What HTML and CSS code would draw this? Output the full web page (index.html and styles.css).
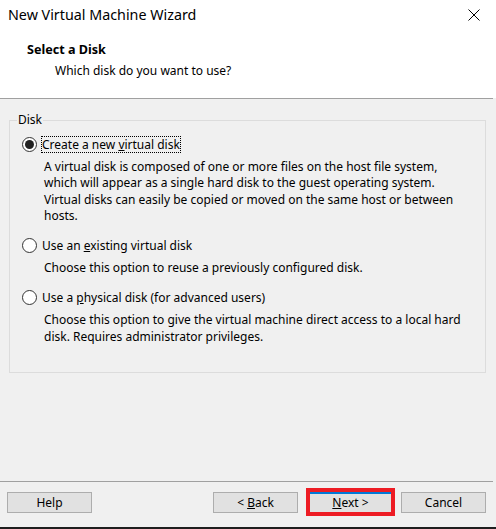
FILE: index.html
```html
<!DOCTYPE html>
<html>
<head>
<meta charset="utf-8">
<link rel="stylesheet" href="styles.css">
</head>
<body>
<div class="window">
  <div class="header">
    <div class="titlebar">
      <span class="title">New Virtual Machine Wizard</span>
      <svg class="close" width="12" height="12" viewBox="0 0 12 12"><path d="M0.5 0.5 L11.5 11.5 M11.5 0.5 L0.5 11.5" stroke="#000" stroke-width="1" fill="none"/></svg>
    </div>
    <div class="heading">Select a Disk</div>
    <div class="subheading">Which disk do you want to use?</div>
  </div>
  <div class="separator"></div>
  <div class="content">
    <fieldset class="group">
      <legend class="legend">Disk</legend>
      <div class="options">
        <div class="option">
          <div class="radio-row"><span class="radio checked"></span><span class="label focus">Create a new <u>v</u>irtual disk</span></div>
          <p class="desc">A virtual disk is composed of one or more files on the host file system, which will appear as a single hard disk to the guest operating system. Virtual disks can easily be copied or moved on the same host or between hosts.</p>
        </div>
        <div class="option">
          <div class="radio-row"><span class="radio"></span><span class="label">Use an <u>e</u>xisting virtual disk</span></div>
          <p class="desc">Choose this option to reuse a previously configured disk.</p>
        </div>
        <div class="option">
          <div class="radio-row"><span class="radio"></span><span class="label">Use a <u>p</u>hysical disk (for advanced users)</span></div>
          <p class="desc">Choose this option to give the virtual machine direct access to a local hard disk. Requires administrator privileges.</p>
        </div>
      </div>
    </fieldset>
  </div>
  <div class="separator"></div>
  <div class="footer">
    <button class="btn">Help</button>
    <button class="btn back">&lt; <u>B</u>ack</button>
    <button class="btn next"><u>N</u>ext &gt;</button>
    <button class="btn cancel">Cancel</button>
  </div>
  <div class="bottom-edge"></div>
</div>
</body>
</html>
```

FILE: styles.css
```css
* { box-sizing: border-box; }
html, body { margin: 0; padding: 0; }
body {
  width: 496px;
  height: 529px;
  overflow: hidden;
  background: #f0f0f0;
  font-family: "Noto Sans", "Open Sans", sans-serif;
  font-size: 12px;
  color: #000;
}
.window {
  width: 496px;
  height: 529px;
  display: flex;
  flex-direction: column;
}
.header {
  height: 98px;
  background: #fff;
  display: flex;
  flex-direction: column;
}
.titlebar {
  height: 25px;
  padding: 5px 0 0 8px;
  display: flex;
  align-items: flex-start;
  justify-content: space-between;
}
.title {
  font-size: 14.3px;
  line-height: 20px;
}
.close {
  margin: 4px 16px 0 0;
  display: block;
}
.heading {
  margin-top: 17px;
  padding-left: 27px;
  font-weight: bold;
  font-size: 12.6px;
  line-height: 16px;
}
.subheading {
  margin-top: 5px;
  padding-left: 55px;
  line-height: 16px;
}
.separator {
  height: 1px;
  background: #a0a0a0;
  margin-right: 3px;
}
.content {
  flex: 1;
  padding: 13px 10px 0 9px;
}
.group {
  margin: 0;
  border: 1px solid #dcdcdc;
  padding: 8px 0 27px 0;
  min-width: 0;
}
.legend {
  margin-left: 7px;
  padding: 0 1px;
  line-height: 16px;
}
.options {
  padding: 0 10px 0 12px;
}
.option + .option { margin-top: 13px; }
.radio-row {
  display: flex;
  align-items: center;
  height: 17px;
}
.radio {
  width: 15px;
  height: 15px;
  border: 1px solid #333;
  border-radius: 50%;
  background: #fff;
  flex: none;
  display: flex;
  align-items: center;
  justify-content: center;
}
.radio.checked::after {
  content: "";
  width: 9px;
  height: 9px;
  border-radius: 50%;
  background: #222;
}
.label {
  margin-left: 4px;
  line-height: 15px;
  border: 1px dotted transparent;
  padding: 0;
}
.label.focus { border-color: #000; }
.desc {
  margin: 6px 0 0 22px;
  max-width: 426px;
  line-height: 16.3px;
}
.footer {
  height: 45px;
  display: flex;
  align-items: flex-start;
  padding: 10px 10px 0 7px;
}
.btn {
  width: 85px;
  height: 21px;
  background: #e1e1e1;
  border: 1px solid #adadad;
  font-family: inherit;
  font-size: 12px;
  color: #000;
  padding: 0;
  line-height: 17px;
}
.back { margin-left: auto; }
.next {
  margin-left: 10px;
  position: relative;
  border-color: #0078d7;
  box-shadow: inset 0 1px 0 #0078d7;
}
.next::after {
  content: "";
  position: absolute;
  left: -3px;
  right: -3px;
  top: -5px;
  bottom: -4px;
  border: 4px solid #ed1c24;
}
.cancel { margin-left: 8px; }
.bottom-edge {
  height: 2px;
  background: #1e1e1e;
}
```
